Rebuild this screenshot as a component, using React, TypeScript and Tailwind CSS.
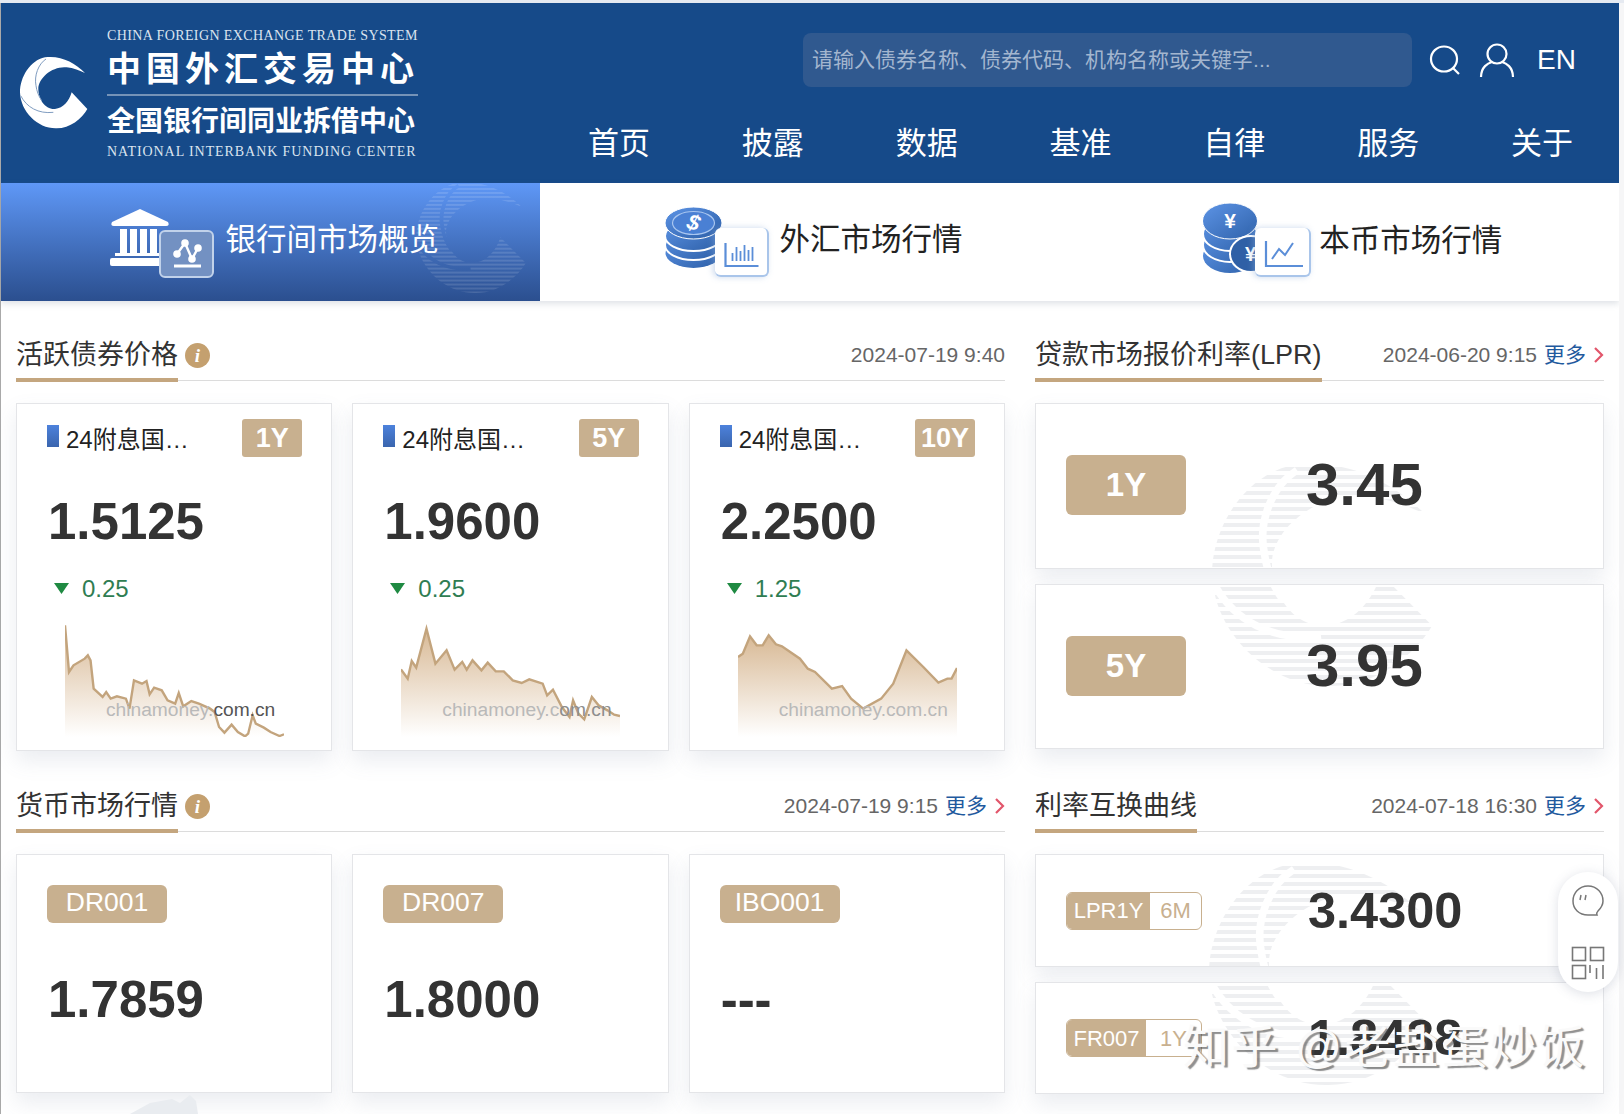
const swoosh =
  "M225 72 C195 40 150 18 105 25 C60 34 30 85 30 130 C32 190 85 240 140 238 C180 238 215 210 232 180 L185 130 C178 155 160 178 135 180 C105 182 85 150 85 120 C85 85 130 50 170 55 C190 57 210 65 225 72 Z"

const chartOne: number[][] = [
  [146, 915], [155, 1055], [165, 1035], [190, 1015], [197, 1005], [203, 1020], [210, 1105], [230, 1130], [238, 1115], [248, 1135],
  [262, 1128], [282, 1135], [290, 1165], [300, 1080], [318, 1090], [328, 1082], [335, 1122], [345, 1102], [362, 1110], [375, 1140],
  [392, 1150], [400, 1118], [410, 1158], [428, 1142], [445, 1150], [470, 1165], [480, 1175], [490, 1220], [502, 1237], [518, 1213],
  [532, 1235], [548, 1248], [555, 1240], [565, 1185], [572, 1210], [590, 1222], [605, 1235], [625, 1247], [635, 1242],
]
const chartTwo: number[][] = [
  [898, 1047], [913, 1075], [922, 1022], [932, 1042], [955, 925], [975, 1030], [1000, 990], [1018, 1048], [1035, 1025], [1045, 1048],
  [1058, 1020], [1078, 1050], [1092, 1027], [1110, 1053], [1128, 1053], [1148, 1080], [1168, 1088], [1185, 1077], [1215, 1090], [1225, 1125],
  [1238, 1108], [1258, 1160], [1275, 1190], [1283, 1140], [1295, 1180], [1308, 1197], [1325, 1130], [1340, 1155], [1360, 1170], [1375, 1183], [1388, 1187],
]
const chartThree: number[][] = [
  [97, 1010], [105, 1000], [117, 948], [128, 975], [138, 975], [148, 945], [160, 972], [170, 978], [200, 1015], [213, 1045],
  [225, 1055], [253, 1105], [270, 1097], [285, 1135], [305, 1165], [335, 1135], [355, 1090], [377, 990], [405, 1040], [430, 1087],
  [445, 1075], [452, 1075], [461, 1043],
]

function LogoMark() {
  return (
    <svg width="90" height="90" viewBox="0 0 270 270" className="shrink-0">
      <path d={swoosh} fill="#fff" />
      <path d="M108 30 C85 45 72 80 78 110 C80 125 85 140 95 155" fill="none" stroke="#7f9cc0" strokeWidth="3" />
      <path d="M32 140 C50 175 85 195 130 190" fill="none" stroke="#7f9cc0" strokeWidth="3" />
    </svg>
  )
}

// striped company mark that sits behind cards and the active tab
function StripeMark({ id, color, width = 220, height = 223 }: { id: string; color: string; width?: number; height?: number }) {
  return (
    <svg width={width} height={height} viewBox="0 0 220 223">
      <defs>
        <pattern id={`${id}-p`} width="8" height="8" patternUnits="userSpaceOnUse">
          <rect width="220" height="4" y="2" fill={color} />
        </pattern>
        <mask id={`${id}-m`}>
          <g transform="scale(1.09 1.037) translate(-30 -25)">
            <path d={swoosh} fill="#fff" />
            <path d="M108 30 C85 45 72 80 78 110 C80 125 85 140 95 155" fill="none" stroke="#000" strokeWidth="7" />
            <path d="M32 140 C50 175 85 195 130 190" fill="none" stroke="#000" strokeWidth="7" />
          </g>
        </mask>
      </defs>
      <rect width="220" height="223" fill={`url(#${id}-p)`} mask={`url(#${id}-m)`} />
    </svg>
  )
}

function Header() {
  return (
    <header className="flex h-[180px] w-full bg-[#164a89] text-white">
      <div className="flex w-[587px] shrink-0">
        <div className="ml-[9px] mt-[46px] -mr-[4px]">
          <LogoMark />
        </div>
        <div className="flex w-[311px] flex-col pt-[24px] ml-[11px]">
          <div className="whitespace-nowrap font-['Liberation_Serif',serif] text-[14px] leading-[18px] tracking-[0.4px] text-[#dbe4ef]">
            CHINA FOREIGN EXCHANGE TRADE SYSTEM
          </div>
          <div className="mt-[1px] whitespace-nowrap text-[34px] font-bold leading-[46px] tracking-[5px]">中国外汇交易中心</div>
          <div className="mt-[2px] h-[2px] bg-[#7593b8]" />
          <div className="mt-[10px] whitespace-nowrap text-[28px] font-bold leading-[32px]">全国银行间同业拆借中心</div>
          <div className="mt-[5px] whitespace-nowrap font-['Liberation_Serif',serif] text-[14px] leading-[18px] tracking-[0.92px] text-[#dbe4ef]">
            NATIONAL INTERBANK FUNDING CENTER
          </div>
        </div>
      </div>
      <div className="flex flex-1 flex-col pr-[46px] pt-[30px]">
        <div className="-mr-[3px] flex h-[54px] items-center justify-end">
          <div className="flex h-[54px] w-[609px] items-center rounded-[8px] bg-[#30598f] pl-[9px] text-[21px] text-[#a3b6cf]">
            请输入债券名称、债券代码、机构名称或关键字...
          </div>
          <svg width="32" height="30" viewBox="0 0 32 30" fill="none" stroke="#fff" strokeWidth="2.2" className="ml-[17px]">
            <ellipse cx="15" cy="14" rx="13" ry="12.5" />
            <path d="M24 23l6 6" />
          </svg>
          <svg width="36" height="35" viewBox="0 0 36 35" fill="none" stroke="#fff" strokeWidth="2.2" className="ml-[18px]">
            <ellipse cx="18" cy="11" rx="9.5" ry="9.5" />
            <path d="M2 34 C2 24 9 20 13 19 M34 34 C34 24 27 20 23 19" />
          </svg>
          <span className="ml-[22px] text-[28px] leading-none">EN</span>
        </div>
        <nav className="mt-[37px] flex h-[40px] items-center justify-between text-[31px] leading-[40px]">
          <span>首页</span>
          <span>披露</span>
          <span>数据</span>
          <span>基准</span>
          <span>自律</span>
          <span>服务</span>
          <span>关于</span>
        </nav>
      </div>
    </header>
  )
}

function BankIcon() {
  return (
    <svg width="60" height="57" viewBox="0 0 60 57" fill="#fff">
      <path d="M30 0 L58 13 Q60 17 56 17 L4 17 Q0 17 2 13 Z" />
      <rect x="10" y="20" width="7" height="24" />
      <rect x="20" y="20" width="7" height="24" />
      <rect x="30" y="20" width="7" height="24" />
      <rect x="40" y="20" width="7" height="24" />
      <rect x="5" y="44" width="48" height="3" />
      <rect x="0" y="49" width="60" height="8" rx="2" />
    </svg>
  )
}

function DollarCoins() {
  return (
    <svg width="57" height="61" viewBox="0 0 57 61">
      <defs>
        <linearGradient id="coinA" x1="0" y1="0" x2="1" y2="1">
          <stop offset="0" stopColor="#5d94e6" />
          <stop offset="1" stopColor="#2c5ea6" />
        </linearGradient>
      </defs>
      <ellipse cx="28.5" cy="46" rx="28" ry="15" fill="url(#coinA)" />
      <ellipse cx="28.5" cy="38" rx="28.5" ry="15" fill="url(#coinA)" stroke="#fff" strokeWidth="2" />
      <ellipse cx="28.5" cy="29" rx="28.5" ry="15" fill="url(#coinA)" stroke="#fff" strokeWidth="2" />
      <ellipse cx="28.5" cy="16" rx="28.5" ry="16" fill="url(#coinA)" stroke="#fff" strokeWidth="1" />
      <ellipse cx="28.5" cy="16" rx="21" ry="11.5" fill="#4a80d4" stroke="#a9c6f0" strokeWidth="1.2" />
      <text
        x="28.5"
        y="23"
        textAnchor="middle"
        fill="#fff"
        fontSize="22"
        fontWeight="700"
        fontStyle="italic"
        fontFamily="Liberation Sans, sans-serif"
        transform="rotate(18 28.5 16)"
      >
        $
      </text>
    </svg>
  )
}

function YuanCoins() {
  return (
    <svg width="55" height="70" viewBox="0 0 55 70">
      <defs>
        <linearGradient id="coinB" x1="0" y1="0" x2="1" y2="1">
          <stop offset="0" stopColor="#5d94e6" />
          <stop offset="1" stopColor="#2f62aa" />
        </linearGradient>
      </defs>
      <ellipse cx="27" cy="53" rx="27" ry="17" fill="url(#coinB)" />
      <ellipse cx="27" cy="42" rx="27" ry="17" fill="url(#coinB)" stroke="#fff" strokeWidth="2" />
      <ellipse cx="27" cy="31" rx="27" ry="17" fill="url(#coinB)" stroke="#fff" strokeWidth="2" />
      <ellipse cx="27" cy="18" rx="27.5" ry="18" fill="url(#coinB)" stroke="#fff" strokeWidth="1" />
      <text x="27" y="25" textAnchor="middle" fill="#fff" fontSize="21" fontWeight="700" fontFamily="Liberation Sans, sans-serif">
        ¥
      </text>
      <ellipse cx="48" cy="51" rx="21" ry="18" fill="#2f60a6" stroke="#fff" strokeWidth="2" />
      <text x="42" y="58" fill="#fff" fontSize="20" fontWeight="700" fontFamily="Liberation Sans, sans-serif">
        ¥
      </text>
    </svg>
  )
}

function Tabs() {
  return (
    <div className="grid h-[118px] grid-cols-3 bg-white shadow-[0_3px_6px_rgba(120,130,150,0.22)]">
      <div className="relative flex items-center justify-center overflow-hidden bg-gradient-to-b from-[#5f98f7] to-[#2b4f8f] pl-[8px] text-white">
        <div className="absolute right-[14px] top-0">
          <StripeMark id="tab" color="rgba(255,255,255,0.13)" width={110} height={111} />
        </div>
        <div className="relative mt-[3px] h-[69px] w-[104px] shrink-0">
          <BankIcon />
          <div className="absolute left-[49px] top-[21px] h-[48px] w-[55px] rounded-[6px] border-2 border-[#c1d2ea] bg-[#7391c2]">
            <svg width="51" height="44" viewBox="0 0 51 44" fill="none" stroke="#fff" strokeWidth="2.4">
              <path d="M16 22 L24 11 L31 27 L37 16" />
              <circle cx="16" cy="22" r="2.6" fill="#fff" />
              <circle cx="24" cy="11" r="2.6" fill="#fff" />
              <circle cx="31" cy="27" r="2.6" fill="#fff" />
              <circle cx="37" cy="16" r="2.6" fill="#fff" />
              <path d="M13 34h27" strokeWidth="3" />
            </svg>
          </div>
        </div>
        <span className="relative mb-[6px] ml-[11px] whitespace-nowrap text-[30.5px] leading-[40px]">银行间市场概览</span>
      </div>
      <div className="flex items-center justify-center pl-[6px]">
        <div className="relative ml-[2px] h-[70px] w-[103px] shrink-0">
          <DollarCoins />
          <div className="absolute left-[50px] top-[21px] h-[49px] w-[54px] rounded-[6px] border-b-2 border-r-2 border-[#a9c5ea] bg-white shadow-[-2px_0_6px_rgba(140,170,215,0.45)]">
            <svg width="52" height="47" viewBox="0 0 51 47" fill="none" stroke="#5b8ed8" strokeWidth="1.8">
              <path d="M10 15 V38 H43" strokeWidth="2.2" />
              <path d="M17 33v-8 M21 33v-14 M25 33v-10 M29 33v-16 M33 33v-11 M37 33v-14" />
            </svg>
          </div>
        </div>
        <span className="mb-[6px] ml-[11px] whitespace-nowrap text-[30.5px] leading-[40px] text-[#222]">外汇市场行情</span>
      </div>
      <div className="flex items-center justify-center pl-[5px]">
        <div className="relative mb-[4px] ml-[2px] h-[74px] w-[106px] shrink-0">
          <YuanCoins />
          <div className="absolute left-[52px] top-[25px] h-[49px] w-[56px] rounded-[6px] border-b-2 border-r-2 border-[#a9c5ea] bg-white shadow-[-2px_0_6px_rgba(140,170,215,0.45)]">
            <svg width="54" height="47" viewBox="0 0 54 47" fill="none" stroke="#5b8ed8" strokeWidth="2">
              <path d="M11 13 V38 H48" strokeWidth="2.2" />
              <path d="M17 31 L24 21 L30 27 L38 15" />
            </svg>
          </div>
        </div>
        <span className="mb-[4px] ml-[10px] whitespace-nowrap text-[30.5px] leading-[40px] text-[#222]">本币市场行情</span>
      </div>
    </div>
  )
}

function InfoDot() {
  return (
    <span className="ml-[7px] mt-[10px] flex h-[25px] w-[25px] items-center justify-center rounded-full bg-[#c4a06f] font-['Liberation_Serif',serif] text-[19px] font-bold italic leading-none text-white">
      i
    </span>
  )
}

function SectionHead({ title, info, date, more }: { title: string; info?: boolean; date: string; more?: boolean }) {
  return (
    <div className="flex h-[48px] justify-between border-b border-[#dcdcdc]">
      <div className="flex">
        <div className="-mb-px flex h-[49px] items-center border-b-[4px] border-[#c4a67f] pb-[1px] text-[27px] text-[#333]">{title}</div>
        {info && <InfoDot />}
      </div>
      <div className="flex h-[43px] items-center text-[21px] text-[#666]">
        <span>{date}</span>
        {more && (
          <>
            <span className="ml-[7px] text-[#1f5a9e]">更多</span>
            <svg width="11" height="16" viewBox="0 0 11 16" fill="none" stroke="#e2566b" strokeWidth="2.2" className="ml-[7px]">
              <path d="M2 1l7 7-7 7" />
            </svg>
          </>
        )}
      </div>
    </div>
  )
}

const cardClass = "relative overflow-hidden border border-[#e4e5e8] bg-white shadow-[0_10px_20px_rgba(100,115,150,0.13)]"

function BondCard({
  tenor,
  price,
  delta,
  points,
  id,
  label,
}: {
  tenor: string
  price: string
  delta: string
  points: number[][]
  id: string
  label: React.ReactNode
}) {
  const minX = points[0][0]
  const maxX = points[points.length - 1][0]
  const line = points.map((p) => p.join(",")).join(" ")
  return (
    <div className={`${cardClass} h-[348px] pt-[15px]`}>
      <div className="flex h-[38px] items-start justify-between pl-[30px] pr-[29px]">
        <div className="flex items-start pt-[6px]">
          <span className="h-[22px] w-[12px] bg-gradient-to-b from-[#4d82dc] to-[#3a65ae]" />
          <span className="ml-[7px] w-[130px] overflow-hidden text-ellipsis whitespace-nowrap text-[24px] leading-[30px] text-[#222]">
            24附息国债09期
          </span>
        </div>
        <span className="flex h-[38px] w-[60px] items-center justify-center rounded-[3px] bg-[#c8b08f] text-[27px] font-bold text-white">{tenor}</span>
      </div>
      <div className="mt-[40px] pl-[31px] text-[51px] font-bold leading-[50px] text-[#333]">{price}</div>
      <div className="ml-[37px] mt-[27px] flex h-[30px] items-center">
        <svg width="15" height="11" viewBox="0 0 15 11" className="-mt-[2px]">
          <path d="M0 0h15L7.5 11z" fill="#1f8a42" />
        </svg>
        <span className="ml-[13px] text-[24px] leading-[30px] text-[#2f7d52]">{delta}</span>
      </div>
      <div className="relative ml-[48px] mt-[18px] h-[115px] w-[219px]">
        <svg width="219" height="115" viewBox={`${minX} 905 ${maxX - minX} 345`} preserveAspectRatio="none">
          <defs>
            <linearGradient id={id} x1="0" y1="0" x2="0" y2="1">
              <stop offset="0" stopColor="#d8b995" />
              <stop offset="1" stopColor="#ffffff" />
            </linearGradient>
          </defs>
          <polygon points={`${minX},1250 ${line} ${maxX},1250`} fill={`url(#${id})`} />
          <polyline points={line} fill="none" stroke="#c3a47d" strokeWidth="2.4" vectorEffect="non-scaling-stroke" />
        </svg>
        <div className="absolute left-[41px] top-[75px] whitespace-nowrap text-[19.2px] leading-[26px]">{label}</div>
      </div>
    </div>
  )
}

function MoneyCard({ code, rate }: { code: string; rate: string }) {
  return (
    <div className={`${cardClass} h-[239px] pl-[31px] pt-[30px]`}>
      <span className="-ml-px flex h-[38px] w-[120px] items-center justify-center rounded-[6px] bg-[#c8b08f] pb-[3px] text-[26.5px] text-white">{code}</span>
      <div className="mt-[52px] text-[51px] font-bold leading-[50px] text-[#333]">{rate}</div>
    </div>
  )
}

function LprCard({ tenor, rate, markTop, markId, height }: { tenor: string; rate: string; markTop: string; markId: string; height: string }) {
  return (
    <div className={`${cardClass} ${height} flex items-center pb-[2px] pl-[30px]`}>
      <div className={`absolute left-[176px] ${markTop}`}>
        <StripeMark id={markId} color="#eeeff1" />
      </div>
      <span className="relative flex h-[60px] w-[120px] items-center justify-center rounded-[6px] bg-[#c8b08f] text-[33px] font-bold text-white">{tenor}</span>
      <span className="relative ml-[120px] text-[60px] font-bold leading-[60px] text-[#333]">{rate}</span>
    </div>
  )
}

function SwapCard({
  left,
  right,
  rate,
  leftWidth,
  markTop,
  markId,
  height,
}: {
  left: string
  right: string
  rate: string
  leftWidth: string
  markTop: string
  markId: string
  height: string
}) {
  return (
    <div className={`${cardClass} ${height} flex items-center pl-[30px]`}>
      <div className={`absolute left-[173px] ${markTop}`}>
        <StripeMark id={markId} color="#eeeff1" />
      </div>
      <div className="relative flex h-[38px] w-[136px] overflow-hidden rounded-[6px] border border-[#c8b08f] bg-white text-[22px]">
        <span className={`flex ${leftWidth} items-center justify-center bg-[#c8b08f] text-white`}>{left}</span>
        <span className="flex flex-1 items-center justify-center text-[#c8b08f]">{right}</span>
      </div>
      <span className="relative ml-[106px] text-[50.5px] font-bold leading-[50px] text-[#333]">{rate}</span>
    </div>
  )
}

function FloatBar() {
  return (
    <div className="absolute left-[1558px] top-[869px] flex h-[120px] w-[60px] flex-col items-center gap-[28px] rounded-[30px] bg-white pt-[12px] shadow-[0_2px_12px_rgba(90,100,130,0.2)]">
      <svg width="34" height="34" viewBox="0 0 34 34" fill="none" stroke="#777" strokeWidth="1.5">
        <path d="M17 2 C8 2 2 9 2 17 C2 25 8 31 17 31 L26 31 Q25 29 27 27 C30 24 32 21 32 17 C32 9 26 2 17 2 Z" />
        <path d="M10 11l-1 5 M15 11l-1 5" />
      </svg>
      <svg width="34" height="34" viewBox="0 0 34 34" fill="none" stroke="#777" strokeWidth="1.6">
        <rect x="1.5" y="1.5" width="13" height="13" />
        <rect x="19.5" y="1.5" width="13" height="13" />
        <rect x="1.5" y="19.5" width="13" height="13" />
        <path d="M19 19v8 M25.5 22v11 M32 19v14" />
      </svg>
    </div>
  )
}

export default function App() {
  return (
    <div className="relative flex h-[1114px] w-[1624px] overflow-hidden border-t-[3px] border-[#e6eaf1] bg-white font-['Liberation_Sans','Noto_Sans_CJK_SC',sans-serif]">
      <div className="w-[1619px] shrink-0 border-l border-[#a9a9a9]">
        <Header />
        <Tabs />
        <main className="grid grid-cols-[989px_569px] gap-x-[30px] gap-y-[33px] pl-[15px] pt-[32px]">
          <section>
            <SectionHead title="活跃债券价格" info date="2024-07-19 9:40" />
            <div className="mt-[22px] grid grid-cols-3 gap-x-[20px]">
              <BondCard
                tenor="1Y"
                price="1.5125"
                delta="0.25"
                points={chartOne}
                id="fillA"
                label={
                  <>
                    <span className="text-[#b9b9b9]">chinamoney.</span>
                    <span className="text-[#555]">com.cn</span>
                  </>
                }
              />
              <BondCard
                tenor="5Y"
                price="1.9600"
                delta="0.25"
                points={chartTwo}
                id="fillB"
                label={
                  <>
                    <span className="text-[#b9b9b9]">chinamoney.c</span>
                    <span className="text-[#8d8d8d]">om.cn</span>
                  </>
                }
              />
              <BondCard tenor="10Y" price="2.2500" delta="1.25" points={chartThree} id="fillC" label={<span className="text-[#b9b9b9]">chinamoney.com.cn</span>} />
            </div>
          </section>
          <section>
            <SectionHead title="贷款市场报价利率(LPR)" date="2024-06-20 9:15" more />
            <div className="mt-[22px] flex flex-col gap-[15px]">
              <LprCard tenor="1Y" rate="3.45" markTop="top-[61px]" markId="lprA" height="h-[166px]" />
              <LprCard tenor="5Y" rate="3.95" markTop="-top-[120px]" markId="lprB" height="h-[165px]" />
            </div>
          </section>
          <section>
            <SectionHead title="货币市场行情" info date="2024-07-19 9:15" more />
            <div className="mt-[22px] grid grid-cols-3 gap-x-[20px]">
              <MoneyCard code="DR001" rate="1.7859" />
              <MoneyCard code="DR007" rate="1.8000" />
              <MoneyCard code="IBO001" rate="---" />
            </div>
          </section>
          <section>
            <SectionHead title="利率互换曲线" date="2024-07-18 16:30" more />
            <div className="mt-[22px] flex flex-col gap-[15px]">
              <SwapCard left="LPR1Y" right="6M" rate="3.4300" leftWidth="w-[83px]" markTop="top-[9px]" markId="swapA" height="h-[113px]" />
              <SwapCard left="FR007" right="1Y" rate="1.8438" leftWidth="w-[79px]" markTop="-top-[119px]" markId="swapB" height="h-[112px]" />
            </div>
          </section>
        </main>
      </div>
      <div className="flex-1 bg-[#f6f6f7]" />
      <svg width="81" height="19" viewBox="0 0 81 19" className="absolute left-[130px] top-[1092px]">
        <path d="M0 19 L20 8 L42 4 L50 8 L60 0 L66 6 L68 19 Z" fill="#e9ecf0" />
      </svg>
      <FloatBar />
      <div className="absolute left-[1183px] top-[1014px] whitespace-nowrap text-[46px] leading-[60px] tracking-[2.5px] text-[#fafafa] [text-shadow:3px_2px_1px_rgba(70,70,70,0.6)]">
        知乎 @老盐蛋炒饭
      </div>
    </div>
  )
}
